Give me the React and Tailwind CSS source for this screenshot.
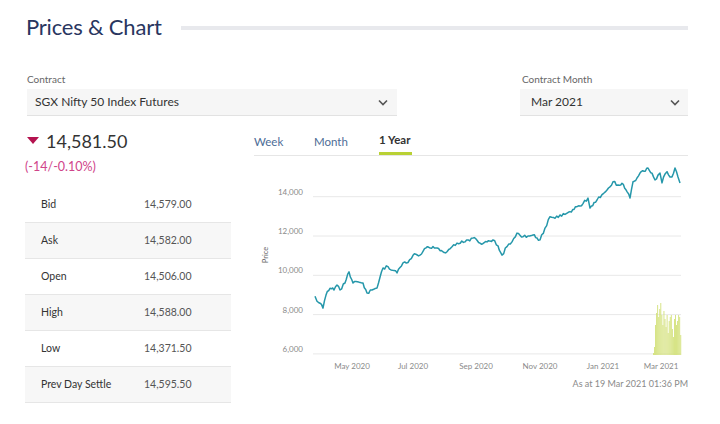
const keyPoints = [
  [315, 8930], [317, 8680], [320, 8580], [323, 8330], [326, 8990], [330, 9340],
  [334, 9250], [337, 9500], [340, 9250], [345, 9610], [349, 10180], [353, 9610],
  [363, 9610], [367, 9100], [372, 9250], [377, 9350], [383, 10370], [388, 10440],
  [397, 10120], [403, 10630], [408, 10650], [413, 11020], [420, 11030], [426, 11400],
  [433, 11460], [440, 11250], [447, 11200], [452, 11450], [457, 11640], [465, 11700],
  [473, 11900], [480, 11640], [487, 11700], [493, 11800], [498, 11500], [502, 11030],
  [507, 11460], [512, 11700], [517, 12150], [523, 11960], [528, 12000], [533, 12050],
  [537, 11900], [540, 11800], [545, 12400], [550, 12980], [555, 12900], [560, 13070],
  [565, 13100], [570, 13240], [574, 13350], [577, 13490], [583, 13650], [588, 13930],
  [590, 13420], [594, 13700], [597, 13830], [602, 14100], [607, 14340], [613, 14760],
  [618, 14600], [622, 14680], [626, 14350], [630, 13930], [633, 14760], [637, 14950],
  [640, 15200], [644, 15300], [648, 15460], [652, 15200], [655, 14850], [658, 15100],
  [660, 15200], [662, 14700], [665, 15150], [667, 15270], [670, 15000], [672, 15010],
  [675, 15460], [678, 15000], [680, 14700],
];

const yOf = (price) => 196.7 + (14000 - price) * 0.01965;

const buildLine = () => {
  const pts = [];
  for (let i = 0; i < keyPoints.length - 1; i++) {
    const [x1, p1] = keyPoints[i];
    const [x2, p2] = keyPoints[i + 1];
    const steps = Math.max(1, Math.round((x2 - x1) / 1.5));
    for (let s = 0; s < steps; s++) {
      const t = s / steps;
      const x = x1 + (x2 - x1) * t;
      const noise = s === 0 ? 0 : Math.sin(x * 12.9898) * 1.4;
      pts.push(`${x.toFixed(1)},${(yOf(p1 + (p2 - p1) * t) + noise).toFixed(1)}`);
    }
  }
  const [lx, lp] = keyPoints[keyPoints.length - 1];
  pts.push(`${lx},${yOf(lp).toFixed(1)}`);
  return pts.join(" ");
};

const volumes = [
  2, 8, 30, 42, 50, 38, 46, 52, 40, 30, 44, 36, 28, 40, 22, 34, 38, 40, 26, 18, 36, 40, 30, 34, 40, 38, 20,
];

const stats = [
  ["Bid", "14,579.00"],
  ["Ask", "14,582.00"],
  ["Open", "14,506.00"],
  ["High", "14,588.00"],
  ["Low", "14,371.50"],
  ["Prev Day Settle", "14,595.50"],
];

const Chevron = () => (
  <svg width="10" height="7" viewBox="0 0 10 7" className="text-[#555]">
    <path d="M1 1.5 L5 5.5 L9 1.5" fill="none" stroke="currentColor" strokeWidth="1.6" />
  </svg>
);

const Chart = () => {
  const grid = [
    [14000, "14,000"],
    [12000, "12,000"],
    [10000, "10,000"],
    [8000, "8,000"],
    [6000, "6,000"],
  ];
  const months = [
    [352, "May 2020"],
    [413, "Jul 2020"],
    [476, "Sep 2020"],
    [540, "Nov 2020"],
    [603, "Jan 2021"],
    [661, "Mar 2021"],
  ];
  return (
    <svg width="436" height="242" viewBox="254 156 436 242" className="block">
      {grid.map(([p, label]) => (
        <g key={label}>
          <line x1="313" x2="681" y1={yOf(p)} y2={yOf(p)} stroke="#e8e8e8" strokeWidth="1" />
          <text x="303" y={yOf(p) - 2} textAnchor="end" fontSize="8" fill="#8a8a8a" fontFamily="Lato">
            {label}
          </text>
        </g>
      ))}
      <text
        x="268"
        y="255"
        fontSize="7.5"
        fill="#666"
        fontFamily="Lato"
        textAnchor="middle"
        transform="rotate(-90 268 255)"
      >
        Price
      </text>
      {volumes.map((h, i) => (
        <rect key={i} x={653 + i * 1.05} y={355 - h} width="0.9" height={h} fill="#d3e17a" />
      ))}
      <polyline points={buildLine()} fill="none" stroke="#2597aa" strokeWidth="1.5" strokeLinejoin="round" />
      {months.map(([x, label]) => (
        <text key={label} x={x} y="369" textAnchor="middle" fontSize="8" fill="#8a8a8a" fontFamily="Lato">
          {label}
        </text>
      ))}
      <text x="688" y="387" textAnchor="end" fontSize="9" fill="#8a8a8a" fontFamily="Lato">
        As at 19 Mar 2021 01:36 PM
      </text>
    </svg>
  );
};

const App = () => {
  return (
    <div className="w-[720px] h-[424px] bg-white overflow-hidden font-['Lato',sans-serif] text-[#333]">
      {/* Title */}
      <div className="flex items-center pl-[26px] pr-[32px] pt-[12px]">
        <h1 className="text-[22px] leading-[30px] text-[#29365f] tracking-[-0.2px]">Prices &amp; Chart</h1>
        <div className="flex-1 h-[4px] bg-[#e8e9ed] ml-[19px] mt-[2px]" />
      </div>

      {/* Selects */}
      <div className="flex justify-between pl-[27px] pr-[32px] mt-[31px]">
        <div className="w-[370px]">
          <div className="text-[10px] leading-[12px] text-[#666]">Contract</div>
          <div className="mt-[4px] h-[27px] bg-[#f6f6f6] border-b border-[#e2e2e2] flex items-center justify-between pl-[8px] pr-[9px]">
            <span className="text-[12px] text-[#333]">SGX Nifty 50 Index Futures</span>
            <Chevron />
          </div>
        </div>
        <div className="w-[168px]">
          <div className="text-[10px] leading-[12px] text-[#666] pl-[2px]">Contract Month</div>
          <div className="mt-[4px] h-[27px] bg-[#f6f6f6] border-b border-[#e2e2e2] flex items-center justify-between pl-[11px] pr-[8px]">
            <span className="text-[12px] text-[#333]">Mar 2021</span>
            <Chevron />
          </div>
        </div>
      </div>

      {/* Body */}
      <div className="flex pl-[25px] mt-[12px]">
        <div className="w-[206px]">
          <div className="flex items-center h-[26px]">
            <svg width="12" height="8" viewBox="0 0 12 8" className="ml-[2px]">
              <path d="M0 0 L12 0 L6 7 Z" fill="#b4134f" />
            </svg>
            <span className="ml-[7px] text-[18px] text-[#333]">14,581.50</span>
          </div>
          <div className="text-[12.5px] leading-[14px] text-[#d0448a] mt-[6px]">(-14/-0.10%)</div>
          <div className="mt-[13px]">
            {stats.map(([label, value], i) => (
              <div
                key={label}
                className={`flex items-center h-[36px] border-b border-[#e6e6e6] text-[10.5px] ${
                  i % 2 === 1 ? "bg-[#f7f7f7]" : "bg-white"
                }`}
              >
                <span className="w-[119px] pl-[16px] text-[#333]">{label}</span>
                <span className="text-[#555]">{value}</span>
              </div>
            ))}
          </div>
        </div>

        <div className="ml-[23px] w-[436px]">
          <div className="flex items-end h-[28px] border-b border-[#e6e6e6] w-[434px] text-[11.5px]">
            <div className="w-[60px] h-full flex items-center text-[#4d6c96]">Week</div>
            <div className="w-[65px] h-full flex items-center text-[#4d6c96]">Month</div>
            <div className="h-full flex flex-col items-start">
              <div className="flex-1 flex items-center font-bold text-[#333]">1 Year</div>
              <div className="w-[33px] h-[3px] bg-[#b9d134]" />
            </div>
          </div>
          <Chart />
        </div>
      </div>
    </div>
  );
};

export default App;
